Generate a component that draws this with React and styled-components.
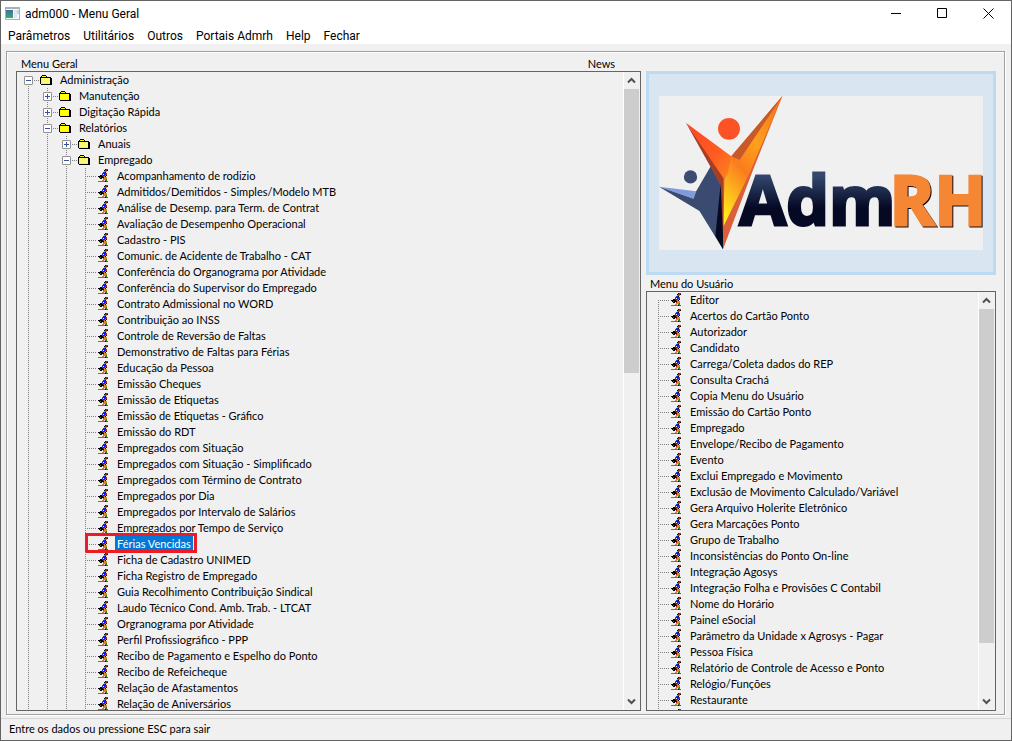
import { useState } from "react";
import styled, { createGlobalStyle } from "styled-components";

const menuItems = ["Parâmetros", "Utilitários", "Outros", "Portais Admrh", "Help", "Fechar"];

const generalFolders = [
  { label: "Administração", depth: 0, open: true },
  { label: "Manutenção", depth: 1, open: false },
  { label: "Digitação Rápida", depth: 1, open: false },
  { label: "Relatórios", depth: 1, open: true },
  { label: "Anuais", depth: 2, open: false },
  { label: "Empregado", depth: 2, open: true },
];

const reports = [
  "Acompanhamento de rodizio",
  "Admitidos/Demitidos - Simples/Modelo MTB",
  "Análise de Desemp. para Term. de Contrat",
  "Avaliação de Desempenho Operacional",
  "Cadastro - PIS",
  "Comunic. de Acidente de Trabalho - CAT",
  "Conferência do Organograma por Atividade",
  "Conferência do Supervisor do Empregado",
  "Contrato Admissional no WORD",
  "Contribuição ao INSS",
  "Controle de Reversão de Faltas",
  "Demonstrativo de Faltas para Férias",
  "Educação da Pessoa",
  "Emissão Cheques",
  "Emissão de Etiquetas",
  "Emissão de Etiquetas - Gráfico",
  "Emissão do RDT",
  "Empregados com Situação",
  "Empregados com Situação - Simplificado",
  "Empregados com Término de Contrato",
  "Empregados por Dia",
  "Empregados por Intervalo de Salários",
  "Empregados por Tempo de Serviço",
  "Férias Vencidas",
  "Ficha de Cadastro UNIMED",
  "Ficha Registro de Empregado",
  "Guia Recolhimento Contribuição Sindical",
  "Laudo Técnico Cond. Amb. Trab. - LTCAT",
  "Orgranograma por Atividade",
  "Perfil Profissiográfico - PPP",
  "Recibo de Pagamento e Espelho do Ponto",
  "Recibo de Refeicheque",
  "Relação de Afastamentos",
  "Relação de Aniversários",
];

const userMenu = [
  "Editor",
  "Acertos do Cartão Ponto",
  "Autorizador",
  "Candidato",
  "Carrega/Coleta dados do REP",
  "Consulta Crachá",
  "Copia Menu do Usuário",
  "Emissão do Cartão Ponto",
  "Empregado",
  "Envelope/Recibo de Pagamento",
  "Evento",
  "Exclui Empregado e Movimento",
  "Exclusão de Movimento Calculado/Variável",
  "Gera Arquivo Holerite Eletrônico",
  "Gera Marcações Ponto",
  "Grupo de Trabalho",
  "Inconsistências do Ponto On-line",
  "Integração Agosys",
  "Integração Folha e Provisões C Contabil",
  "Nome do Horário",
  "Painel eSocial",
  "Parâmetro da Unidade x Agrosys - Pagar",
  "Pessoa Física",
  "Relatório de Controle de Acesso e Ponto",
  "Relógio/Funções",
  "Restaurante",
  "",
];

const generalTree = [...generalFolders, ...reports.map((label) => ({ label, depth: 3 }))];
const userTree = userMenu.map((label) => ({ label, depth: 0 }));

const runnerPixels = [
  "........krr.",
  ".......krrk.",
  ".......oro..",
  "......bbk...",
  ".....rbbbr..",
  ".....bwbbr..",
  "...kkrbbok..",
  ".kkkkkrok...",
  "..kgkkkooo..",
  "...kk.rooo..",
  "......ooor..",
  ".....oo.gg..",
  ".ssssssskgg.",
];

const runnerColors = {
  r: "#a83018",
  k: "#000000",
  o: "#e08028",
  b: "#1020e0",
  w: "#ffffff",
  g: "#208028",
  s: "#707070",
};

function RunnerIcon() {
  return (
    <PixelSvg width="12" height="14" viewBox="0 0 12 14" aria-hidden="true">
      {runnerPixels.flatMap((line, y) =>
        [...line].map((c, x) =>
          c === "." ? null : <rect key={`${x}-${y}`} x={x} y={y} width="1" height="1" fill={runnerColors[c]} />
        )
      )}
    </PixelSvg>
  );
}

function FolderIcon() {
  return (
    <PixelSvg width="12" height="14" viewBox="0 0 12 14" aria-hidden="true">
      <path d="M2 2h4v1h1v1h4v8H1V3h1z" fill="#ffff00" />
      <path d="M2 5h1v1H2zM4 5h1v1H4zM6 5h1v1H6zM8 5h1v1H8zM3 6h1v1H3zM5 6h1v1H5zM7 6h1v1H7zM9 6h1v1H9zM2 7h1v1H2zM4 7h1v1H4zM6 7h1v1H6zM8 7h1v1H8zM3 8h1v1H3zM5 8h1v1H5zM7 8h1v1H7zM9 8h1v1H9zM2 9h1v1H2zM4 9h1v1H4zM6 9h1v1H6zM8 9h1v1H8z" fill="#ffff80" />
      <path d="M2 2h4v1H2zM1 3h1v1H1zM6 3h1v1H6zM1 4h10v1H1zM0 4h1v7H0zM10 4h1v8h-1zM11 5h1v7h-1zM1 11h11v1H1z" fill="#000" />
    </PixelSvg>
  );
}

function AppIcon() {
  return (
    <svg width="15" height="13" viewBox="0 0 15 13" aria-hidden="true">
      <defs>
        <linearGradient id="appIcon" x1="0" y1="0" x2="0" y2="1">
          <stop offset="0" stopColor="#3f6fa0" />
          <stop offset="1" stopColor="#3ea878" />
        </linearGradient>
      </defs>
      <rect x="0" y="0" width="15" height="13" fill="#a8b0b4" />
      <rect x="1" y="2" width="13" height="10" fill="#f6f9fa" />
      <rect x="1" y="3" width="7" height="8" fill="url(#appIcon)" />
      <rect x="9" y="3" width="3" height="8" fill="#dbe9ee" />
      <rect x="12" y="3" width="2" height="4" fill="#b9d8e8" />
    </svg>
  );
}

function Logo() {
  return (
    <LogoSvg viewBox="54 108 975 462" role="img" aria-label="AdmRH">
      <defs>
        <linearGradient id="navy" x1="0" y1="0" x2="0" y2="1">
          <stop offset="0.25" stopColor="#34486f" />
          <stop offset="0.6" stopColor="#050924" />
        </linearGradient>
        <linearGradient id="flame" x1="0.1" y1="0.1" x2="0.9" y2="0.9">
          <stop offset="0" stopColor="#ff4a24" />
          <stop offset="0.6" stopColor="#ff5a22" />
          <stop offset="1" stopColor="#fb7c1e" />
        </linearGradient>
        <linearGradient id="core" x1="0.7" y1="0" x2="0.2" y2="1">
          <stop offset="0" stopColor="#f47a1e" />
          <stop offset="0.35" stopColor="#ffa01c" />
          <stop offset="0.6" stopColor="#fb7c1e" />
          <stop offset="1" stopColor="#ffe81c" />
        </linearGradient>
      </defs>
      <circle cx="149" cy="352" r="20" fill="#3c4c70" />
      <path d="M54 382L166 395L158 418Z" fill="#7f9bdc" />
      <path d="M54 382L158 418L166 395L210 320L240 375L247 570L176 455Z" fill="#3a4a70" />
      <path d="M240 372L248 385L247 570L224 530Z" fill="#050924" />
      <circle cx="265" cy="207" r="33" fill="#fc5226" />
      <path d="M135 189L250 350L249 570L240 376Z" fill="#a83d26" />
      <path d="M426 108L334 340L247 570L248 350L272 290Z" fill="#d9603a" />
      <path d="M426 108L325 345L249 500L251 358L272 290L297 300Z" fill="url(#core)" />
      <path d="M135 189L272 290L262 340L251 360Z" fill="url(#flame)" />
      <path d="M272 290L426 108L297 300Z" fill="#c85a28" />
      <LogoText x="297" y="496" $paint="url(#navy)">Adm</LogoText>
      <LogoText x="753" y="499" $paint="#140b12">RH</LogoText>
      <LogoText x="750" y="496" $paint="#f58634">RH</LogoText>
    </LogoSvg>
  );
}

function TreeRow({ item, first, selected, onSelect }) {
  const isFolder = item.open !== undefined;
  return (
    <Row role="treeitem" aria-selected={selected} aria-level={item.depth + 1}>
      {Array.from({ length: item.depth }, (_, i) => (
        <Guide key={i} />
      ))}
      <Node>
        <Branch $first={first}>
          {isFolder && (
            <Expander aria-label={`${item.open ? "Recolher" : "Expandir"} ${item.label}`}>
              <svg width="9" height="9" viewBox="0 0 9 9">
                <path d={item.open ? "M2 4h5v1H2z" : "M2 4h5v1H2zM4 2h1v5H4z"} fill="#3454a0" />
              </svg>
            </Expander>
          )}
        </Branch>
        {isFolder ? <FolderIcon /> : <RunnerIcon />}
        {item.label && (
          <Label $selected={selected} onClick={onSelect}>
            {item.label}
          </Label>
        )}
        {selected && <Marker />}
      </Node>
    </Row>
  );
}

function Tree({ items, name, thumb, initial }) {
  const [selected, setSelected] = useState(initial);
  return (
    <Pane>
      <Rows role="tree" aria-label={name}>
        {items.map((item, i) => (
          <TreeRow
            key={i}
            item={item}
            first={i === 0}
            selected={item.label === selected}
            onSelect={() => setSelected(item.label)}
          />
        ))}
      </Rows>
      <Scrollbar>
        <ScrollButton aria-label="Rolar para cima">
          <svg width="9" height="7" viewBox="0 0 9 7">
            <path d="M1 5.5L4.5 2L8 5.5" fill="none" stroke="#505050" strokeWidth="2" />
          </svg>
        </ScrollButton>
        <Track>
          <Thumb style={{ height: `${thumb}%` }} />
        </Track>
        <ScrollButton aria-label="Rolar para baixo">
          <svg width="9" height="7" viewBox="0 0 9 7">
            <path d="M1 1.5L4.5 5L8 1.5" fill="none" stroke="#505050" strokeWidth="2" />
          </svg>
        </ScrollButton>
      </Scrollbar>
    </Pane>
  );
}

export default function App() {
  return (
    <>
      <GlobalStyle />
      <Window>
        <TitleBar>
          <AppIcon />
          <Title>adm000 - Menu Geral</Title>
          <WindowButton aria-label="Minimizar">
            <svg width="11" height="11" viewBox="0 0 11 11">
              <path d="M0 5h10v1H0z" />
            </svg>
          </WindowButton>
          <WindowButton aria-label="Maximizar">
            <svg width="11" height="11" viewBox="0 0 11 11">
              <path d="M0.5 0.5h9v9h-9z" fill="none" stroke="#000" />
            </svg>
          </WindowButton>
          <WindowButton aria-label="Fechar janela">
            <svg width="11" height="11" viewBox="0 0 11 11">
              <path d="M0.5 0.5l10 10M10.5 0.5l-10 10" fill="none" stroke="#000" />
            </svg>
          </WindowButton>
        </TitleBar>
        <MenuBar>
          {menuItems.map((item) => (
            <MenuButton key={item}>{item}</MenuButton>
          ))}
        </MenuBar>

        <GroupBox>
          <Column>
            <Heading>
              <span>Menu Geral</span>
              <span>News</span>
            </Heading>
            <Tree items={generalTree} name="Menu Geral" thumb={47} initial="Férias Vencidas" />
          </Column>
          <SideColumn>
            <Banner>
              <Logo />
            </Banner>
            <SideHeading>Menu do Usuário</SideHeading>
            <Tree items={userTree} name="Menu do Usuário" thumb={87} />
          </SideColumn>
        </GroupBox>

        <StatusBar>Entre os dados ou pressione ESC para sair</StatusBar>
      </Window>
    </>
  );
}

const GlobalStyle = createGlobalStyle`
  * {
    box-sizing: border-box;
  }

  body {
    margin: 0;
    background: #f0f0f0;
  }

  button {
    margin: 0;
    padding: 0;
    border: 0;
    background: none;
    color: inherit;
    font: inherit;
  }

  svg {
    display: block;
    flex: none;
  }
`;

const Window = styled.div`
  display: flex;
  flex-direction: column;
  height: 100vh;
  border: 1px solid #646464;
  background: #f0f0f0;
  color: #000;
  font-family: Lato, "Liberation Sans", sans-serif;
  font-size: 11px;
  line-height: 16px;
`;

const TitleBar = styled.header`
  display: flex;
  align-items: center;
  height: 25px;
  padding-left: 4px;
  background: #fff;
  font-family: Roboto, "Open Sans", sans-serif;
  font-size: 12px;
`;

const Title = styled.span`
  flex: 1;
  padding-left: 5px;
`;

const WindowButton = styled.button`
  display: flex;
  align-items: center;
  justify-content: center;
  width: 46px;
  height: 25px;
`;

const MenuBar = styled.nav`
  display: flex;
  align-items: center;
  gap: 13px;
  height: 18px;
  padding: 2px 7px 0;
  background: #fff;
  font-family: Roboto, "Open Sans", sans-serif;
  font-size: 12px;
`;

const MenuButton = styled.button`
  white-space: nowrap;
`;

const GroupBox = styled.main`
  display: flex;
  flex: 1;
  gap: 5px;
  min-height: 0;
  margin: 7px 6px 3px 5px;
  padding: 0 8px 3px 9px;
  border: 1px solid #a0a0a0;
  box-shadow: 1px 1px #fff, inset 1px 1px #fff;
`;

const Column = styled.section`
  display: flex;
  flex-direction: column;
  flex: 25;
  min-width: 0;
`;

const SideColumn = styled(Column)`
  flex: 14;
  padding-top: 19px;
`;

const Heading = styled.div`
  display: flex;
  justify-content: space-between;
  padding: 5px 26px 0 5px;
  line-height: 14px;
`;

const SideHeading = styled.div`
  padding: 2px 0 0 4px;
  line-height: 14px;
`;

const Pane = styled.div`
  display: flex;
  flex: 1;
  min-height: 0;
  border: 1px solid #646464;
`;

const Rows = styled.ul`
  flex: 1;
  min-width: 0;
  margin: 0;
  padding: 0;
  overflow: hidden;
  list-style: none;
`;

const Row = styled.li`
  display: flex;
  height: 16px;
`;

const Guide = styled.span`
  flex: none;
  width: 19px;
  background: repeating-linear-gradient(#808080 0 1px, transparent 1px 2px) 11px 0 / 1px 100% no-repeat;
`;

const Node = styled.span`
  position: relative;
  display: flex;
  align-items: center;
`;

const Branch = styled.span`
  display: flex;
  align-items: center;
  align-self: stretch;
  width: 23px;
  padding-left: 7px;
  background:
    repeating-linear-gradient(#808080 0 1px, transparent 1px 2px) 11px ${(p) => (p.$first ? "8px" : "0")} / 1px 100% no-repeat,
    repeating-linear-gradient(90deg, #808080 0 1px, transparent 1px 2px) 11px 8px / 11px 1px no-repeat;
`;

const Expander = styled.button`
  width: 9px;
  height: 9px;
  border: 1px solid #919191;
  border-radius: 1px;
  background: #fff;

  svg {
    margin: -1px;
  }
`;

const PixelSvg = styled.svg`
  shape-rendering: crispEdges;
`;

const Label = styled.button`
  height: 16px;
  margin-left: 6px;
  padding: 0 2px;
  background: ${(p) => (p.$selected ? "#0078d7" : "transparent")};
  color: ${(p) => (p.$selected ? "#fff" : "#000")};
  white-space: nowrap;
`;

const Marker = styled.span`
  position: absolute;
  inset: -3px -4px -1px 11px;
  border: 3px solid #ed1c24;
  pointer-events: none;
`;

const Scrollbar = styled.div`
  display: flex;
  flex-direction: column;
  width: 17px;
  padding-right: 1px;
  border-left: 1px solid #fff;
`;

const ScrollButton = styled.button`
  display: flex;
  align-items: center;
  justify-content: center;
  height: 17px;
`;

const Track = styled.div`
  flex: 1;
`;

const Thumb = styled.div`
  background: #cdcdcd;
`;

const Banner = styled.div`
  display: flex;
  align-items: center;
  justify-content: center;
  height: 204px;
  border: 3px solid #bddaf3;
  background: #d9e6f1;
`;

const LogoSvg = styled.svg`
  width: 94%;
  overflow: visible;
  background: #f0f0f0;
`;

const LogoText = styled.text`
  fill: ${(p) => p.$paint};
  stroke: ${(p) => p.$paint};
  stroke-width: 9px;
  font-family: "Open Sans", sans-serif;
  font-size: 204px;
  font-weight: 700;
`;

const StatusBar = styled.footer`
  height: 22px;
  padding: 2px 8px;
  border-top: 1px solid #d7d7d7;
`;
